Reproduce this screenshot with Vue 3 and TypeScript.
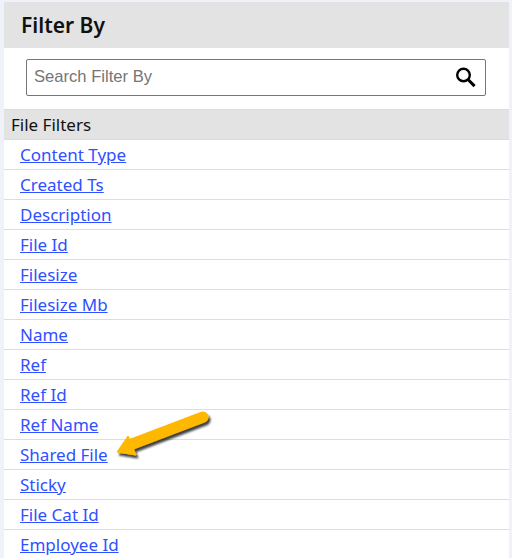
<template>
  <div class="panel">
    <div class="panel-title">Filter By</div>
    <div class="search-row">
      <div class="search-box">
        <input class="search-input" type="text" placeholder="Search Filter By" />
        <svg class="search-icon" width="20" height="21" viewBox="0 0 20 21">
          <circle cx="7.5" cy="8" r="6.3" fill="none" stroke="#000" stroke-width="2.4" />
          <path d="M12 12.5 L18.6 19.1" stroke="#000" stroke-width="3" fill="none" />
        </svg>
      </div>
    </div>
    <div class="group-title">File Filters</div>
    <ul class="filter-list">
      <li v-for="name in filters" :key="name" class="filter-item">
        <a href="#" class="filter-link">{{ name }}</a>
      </li>
    </ul>
    <svg class="arrow" width="110" height="64" viewBox="0 0 110 64">
      <defs>
        <filter id="arrow-shadow" x="-10%" y="-20%" width="125%" height="150%">
          <feDropShadow dx="2" dy="3" stdDeviation="1" flood-color="#000" flood-opacity="0.75" />
        </filter>
      </defs>
      <g filter="url(#arrow-shadow)">
        <path d="M28 44 L99 17" stroke="#ffb800" stroke-width="11" stroke-linecap="round" fill="none" />
        <path d="M13 52 L24 36 L32 55 Z" fill="#ffb800" stroke="#ffb800" stroke-width="1" stroke-linejoin="round" />
      </g>
    </svg>
  </div>
</template>

<script setup lang="ts">
const filters: string[] = [
  'Content Type',
  'Created Ts',
  'Description',
  'File Id',
  'Filesize',
  'Filesize Mb',
  'Name',
  'Ref',
  'Ref Id',
  'Ref Name',
  'Shared File',
  'Sticky',
  'File Cat Id',
  'Employee Id',
]
</script>

<style>
html,
body {
  background: #f0f2fa;
  overflow: hidden;
}
</style>

<style scoped>
.panel {
  position: relative;
  margin: 2px 3px 0 4px;
  background: #fff;
  font-family: "Noto Sans", "Open Sans", sans-serif;
}

.panel-title {
  height: 46px;
  padding-left: 17px;
  background: #e3e3e3;
  color: #111;
  font-size: 21px;
  font-weight: 600;
  line-height: 47px;
}

.search-row {
  padding: 11px 23px 13px 22px;
}

.search-box {
  display: flex;
  align-items: center;
  height: 37px;
  box-sizing: border-box;
  border: 1px solid #767676;
  border-radius: 2px;
  padding: 0 9px 0 7px;
}

.search-input {
  flex: 1;
  min-width: 0;
  border: 0;
  outline: 0;
  padding: 0;
  margin-bottom: 2px;
  font-family: "Liberation Sans", sans-serif;
  font-size: 16.6px;
}

.search-input::placeholder {
  color: #757575;
}

.group-title {
  height: 31px;
  box-sizing: border-box;
  padding-left: 7px;
  border-top: 1px solid #dcdcdc;
  border-bottom: 1px solid #dcdcdc;
  background: #e3e3e3;
  color: #111;
  font-size: 17px;
  line-height: 29px;
}

.filter-list {
  margin: 0;
  padding: 0;
  list-style: none;
}

.filter-item {
  height: 30px;
  box-sizing: border-box;
  padding-left: 16px;
  border-bottom: 1px solid #ddd;
  font-size: 17px;
  line-height: 30px;
}

.filter-link {
  color: #2f50ff;
}

.arrow {
  position: absolute;
  left: 100px;
  top: 398px;
}
</style>
